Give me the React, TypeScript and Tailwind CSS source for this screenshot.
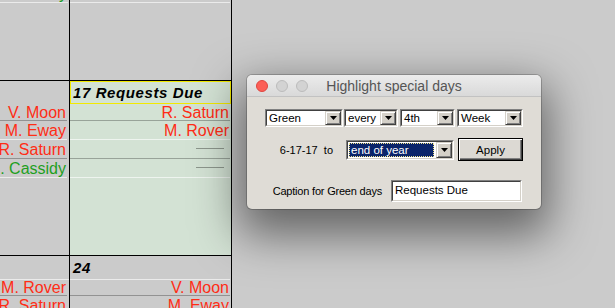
import React from "react";

const RED = "text-[#ff2d16]";
const GREEN = "text-[#1f9f1f]";

function Row({
  h,
  line,
  children,
  pt,
  right,
}: {
  h: string;
  line: "dark" | "light";
  children?: React.ReactNode;
  pt?: string;
  right?: string;
}) {
  const lineCls = line === "dark" ? "border-b-[rgba(0,0,0,0.28)]" : "border-b-[rgba(255,255,255,0.62)]";
  return (
    <div className={`${h} shrink-0 ${right ?? "mr-[1px]"}`}>
      <div className={`h-full border-b ${lineCls} flex justify-end whitespace-nowrap overflow-hidden text-[16px] leading-[16px] pr-[1px] ${pt ?? ""}`}>
        {children}
      </div>
    </div>
  );
}

function Dash() {
  return (
    <div className="h-full flex items-center pr-[5px] pb-[1px]">
      <div className="w-[28px] h-px bg-[#8c968c]" />
    </div>
  );
}

function Select({ w, text }: { w: string; text: string }) {
  return (
    <div className={`${w} h-[18px] flex border border-t-[#808080] border-l-[#808080] border-r-white border-b-white`}>
      <div className="flex flex-1 min-w-0 border border-t-[#404040] border-l-[#404040] border-r-[#d4d0c8] border-b-[#d4d0c8] bg-white">
        <div className="flex-1 pl-[2px] text-[11.5px] leading-[14px] text-black whitespace-nowrap overflow-hidden">{text}</div>
        <Arrow />
      </div>
    </div>
  );
}

function Arrow() {
  return (
    <div className="w-[16px] h-full bg-[#d4d0c8] border border-t-[#d4d0c8] border-l-[#d4d0c8] border-r-[#404040] border-b-[#404040] shadow-[inset_1px_1px_0_#ffffff,inset_-1px_-1px_0_#808080] flex items-center justify-center">
      <svg width="7" height="4" viewBox="0 0 7 4">
        <path d="M0 0H7L3.5 4Z" fill="#000" />
      </svg>
    </div>
  );
}

export default function App() {
  return (
    <div className="relative w-[615px] h-[308px] overflow-hidden bg-[#cbcbcb] font-['Liberation_Sans',Arial,sans-serif]">
      {/* Calendar */}
      <div className="flex h-full">
        {/* Column 1 */}
        <div className="w-[70px] shrink-0 border-r border-black flex flex-col">
          <div className="h-[81px] shrink-0 border-b border-black overflow-hidden">
            <div className="-mt-[16px]">
              <Row h="h-[19px]" line="light" pt="pt-[2px]">
                <span className={GREEN}>J. Cassidy</span>
              </Row>
            </div>
          </div>
          <div className="h-[175px] shrink-0 border-b border-black flex flex-col overflow-hidden">
            <div className="h-[23px] shrink-0" />
            <Row h="h-[17px]" line="dark" pt="pt-px" right="mr-[2px]">
              <span className={RED}>V. Moon</span>
            </Row>
            <Row h="h-[19px]" line="light" pt="pt-[2px]" right="mr-[2px]">
              <span className={RED}>M. Eway</span>
            </Row>
            <Row h="h-[19px]" line="dark" pt="pt-[2px]" right="mr-[2px]">
              <span className={RED}>R. Saturn</span>
            </Row>
            <Row h="h-[19px]" line="light" pt="pt-[2px]" right="mr-[2px]">
              <span className={GREEN}>J. Cassidy</span>
            </Row>
          </div>
          <div className="flex-1 flex flex-col overflow-hidden">
            <Row h="h-[24px]" line="light" right="mr-0" />
            <Row h="h-[16px]" line="dark" right="mr-[2px]">
              <span className={RED}>M. Rover</span>
            </Row>
            <Row h="h-[19px]" line="light" pt="pt-[2px]" right="mr-[2px]">
              <span className={RED}>R. Saturn</span>
            </Row>
          </div>
        </div>

        {/* Column 2 */}
        <div className="w-[162px] shrink-0 border-r border-black flex flex-col">
          <div className="h-[81px] shrink-0 border-b border-black overflow-hidden">
            <div className="-mt-[16px]">
              <Row h="h-[19px]" line="light" />
            </div>
          </div>
          <div className="h-[175px] shrink-0 border-b border-black flex flex-col overflow-hidden bg-[#d3e2d4]">
            <div className="h-[23px] shrink-0 border border-[#f2ea00] pl-[2px] text-[15px] leading-[21px] font-bold italic tracking-[0.6px] text-black whitespace-nowrap">
              17 Requests Due
            </div>
            <Row h="h-[17px]" line="dark" pt="pt-px">
              <span className={RED}>R. Saturn</span>
            </Row>
            <Row h="h-[19px]" line="light" pt="pt-[2px]">
              <span className={RED}>M. Rover</span>
            </Row>
            <Row h="h-[19px]" line="dark">
              <Dash />
            </Row>
            <Row h="h-[19px]" line="light">
              <Dash />
            </Row>
          </div>
          <div className="flex-1 flex flex-col overflow-hidden">
            <Row h="h-[24px]" line="light">
              <div className="flex-1 pl-[3px] text-[15px] leading-[23px] font-bold italic tracking-[0.6px] text-black">24</div>
            </Row>
            <Row h="h-[16px]" line="dark">
              <span className={RED}>V. Moon</span>
            </Row>
            <Row h="h-[19px]" line="light" pt="pt-[2px]">
              <span className={RED}>M. Eway</span>
            </Row>
          </div>
        </div>
      </div>

      {/* Dialog window */}
      <div className="absolute left-[247px] top-[75px] w-[294px] rounded-[5px] overflow-hidden ring-1 ring-black/20 shadow-[0_18px_45px_8px_rgba(0,0,0,0.5)] bg-[#dfdcd6]">
        <div className="relative h-[22px] border-b border-[#c2c2c2] bg-gradient-to-b from-[#ececec] to-[#d9d9d9] flex items-center justify-center">
          <div className="absolute left-[9px] top-0 h-full flex items-center gap-[8px]">
            <div className="w-[12px] h-[12px] rounded-full bg-[#fc5f57] border border-[#df4640]" />
            <div className="w-[12px] h-[12px] rounded-full bg-[#d3d3d3] border border-[#bcbcbc]" />
            <div className="w-[12px] h-[12px] rounded-full bg-[#d3d3d3] border border-[#bcbcbc]" />
          </div>
          <span className="text-[14px] leading-[16px] text-[#555555] pt-[1px]">Highlight special days</span>
        </div>

        <div className="pt-[12px] pb-[7px] pl-[18px] pr-[18px] flex flex-col">
          <div className="flex h-[18px]">
            <Select w="w-[78px]" text="Green" />
            <div className="w-[1px]" />
            <Select w="w-[54px]" text="every" />
            <div className="w-[2px]" />
            <Select w="w-[55px]" text="4th" />
            <div className="w-[2px]" />
            <Select w="w-[66px]" text="Week" />
          </div>

          <div className="mt-[11px] h-[23px] flex items-center justify-end">
            <span className="text-[11px] leading-[14px] text-black whitespace-pre mr-[13px]">6-17-17  to</span>
            <div className="w-[108px] h-[20px] flex border border-t-[#808080] border-l-[#808080] border-r-white border-b-white">
              <div className="flex flex-1 min-w-0 border border-t-[#404040] border-l-[#404040] border-r-[#d4d0c8] border-b-[#d4d0c8] bg-white">
                <div className="flex-1 p-[1px] pr-[2px] min-w-0">
                  <div className="h-full bg-[#0a246a] border border-dotted border-[#efe28a] pl-[1px] text-[11.5px] leading-[12px] text-white whitespace-nowrap overflow-hidden">
                    end of year
                  </div>
                </div>
                <Arrow />
              </div>
            </div>
            <div className="ml-[4px] w-[65px] h-[23px] border border-black bg-[#dcd9d3] shadow-[inset_1px_1px_0_#ffffff,inset_-1px_-1px_0_#404040,inset_-2px_-2px_0_#808080] flex items-center justify-center text-[11.5px] leading-[14px] text-black">
              Apply
            </div>
          </div>

          <div className="mt-[19px] h-[22px] flex items-center justify-end pr-[1px]">
            <span className="text-[11px] leading-[14px] text-black whitespace-nowrap mr-[9px] tracking-[-0.2px]">Caption for Green days</span>
            <div className="w-[131px] h-[22px] flex border border-t-[#808080] border-l-[#808080] border-r-white border-b-white">
              <div className="flex-1 border border-t-[#404040] border-l-[#404040] border-r-[#d4d0c8] border-b-[#d4d0c8] bg-white pl-[2px] text-[11.5px] leading-[16px] text-black whitespace-nowrap">
                Requests Due
              </div>
            </div>
          </div>
        </div>
      </div>
    </div>
  );
}
